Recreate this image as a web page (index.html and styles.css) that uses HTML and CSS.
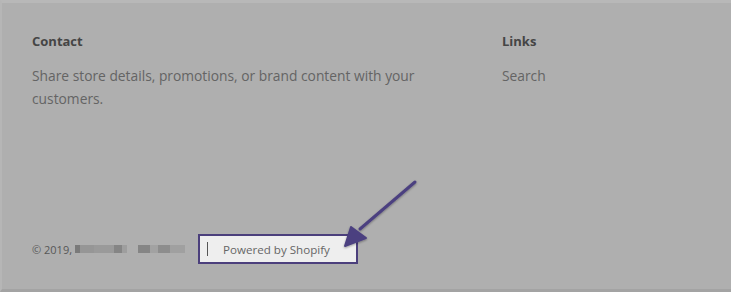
FILE: index.html
```html
<!DOCTYPE html>
<html lang="en">
<head>
    <meta charset="UTF-8">
    <title>Footer</title>
    <link rel="stylesheet" href="styles.css">
</head>
<body>
    <div class="page">
        <footer class="site-footer">
            <div class="footer-cols">
                <div class="footer-col contact">
                    <h4>Contact</h4>
                    <p>Share store details, promotions, or brand content with your customers.</p>
                </div>
                <div class="footer-col links">
                    <h4>Links</h4>
                    <p>Search</p>
                </div>
            </div>
            <div class="footer-bottom">
                <span class="copyright">&copy; 2019,</span>
                <span class="blurred">
                    <i class="b1"></i><i class="b2"></i><i class="b3"></i><i class="b4"></i><i class="b9"></i>
                    <i class="gap"></i>
                    <i class="b5"></i><i class="b6"></i><i class="b7"></i><i class="b8"></i>
                </span>
                <a class="powered" href="#"><span class="caret"></span>Powered by Shopify</a>
            </div>
        </footer>
        <svg class="arrow" width="100" height="90" viewBox="0 0 100 90">
            <defs>
                <filter id="shadow" x="-20%" y="-20%" width="140%" height="140%">
                    <feDropShadow dx="0" dy="1" stdDeviation="1.2" flood-color="#000" flood-opacity="0.35"/>
                </filter>
            </defs>
            <g filter="url(#shadow)">
                <line x1="83" y1="12" x2="28" y2="59" stroke="#4c4180" stroke-width="3" stroke-linecap="round"/>
                <polygon points="13,76 19,57 34,68" fill="#4c4180" stroke="#4c4180" stroke-width="2" stroke-linejoin="round"/>
            </g>
        </svg>
    </div>
</body>
</html>
```

FILE: styles.css
```css
body {
    margin: 0;
    background-color: #afafaf;
    font-family: "Open Sans", Lato, sans-serif;
}

.page {
    position: relative;
    width: 731px;
    height: 292px;
    box-sizing: border-box;
    border-top: 3px solid #b8b8b8;
    border-left: 2px solid #b6b6b6;
    border-bottom: 3px solid #a3a3a3;
    overflow: hidden;
}

.site-footer {
    padding: 28px 0 0 30px;
}

.footer-cols {
    display: flex;
}

.footer-col h4 {
    margin: 0 0 13px;
    font-size: 13px;
    font-weight: 700;
    line-height: 20px;
    color: #454545;
}

.footer-col p {
    margin: 0;
    font-size: 13.8px;
    line-height: 23px;
    color: #646464;
}

.contact {
    width: 400px;
    margin-right: 70px;
}

.footer-bottom {
    display: flex;
    align-items: center;
    margin-top: 124px;
}

.copyright {
    font-size: 11px;
    color: #575757;
}

.blurred {
    display: flex;
    align-items: center;
    margin-left: 3px;
    filter: blur(0.6px);
}

.blurred i {
    display: block;
    height: 8px;
    background-color: #8a8a8a;
}

.blurred .b1 { width: 5px; background-color: #7a7a7a; }
.blurred .b2 { width: 14px; background-color: #969696; }
.blurred .b3 { width: 20px; background-color: #9a9a9a; }
.blurred .b4 { width: 8px; background-color: #858585; }
.blurred .b9 { width: 5px; background-color: #9e9e9e; }
.blurred .gap { width: 11px; background: none; }
.blurred .b5 { width: 12px; background-color: #858585; }
.blurred .b6 { width: 8px; background-color: #a2a2a2; }
.blurred .b7 { width: 12px; background-color: #8d8d8d; }
.blurred .b8 { width: 15px; background-color: #a0a0a0; }

.powered {
    display: flex;
    align-items: center;
    box-sizing: border-box;
    width: 160px;
    height: 30px;
    margin-left: 13px;
    padding-left: 7px;
    border: 2px solid #4b3f7c;
    background-color: #eeeeee;
    font-size: 11.6px;
    color: #666;
    text-decoration: none;
}

.caret {
    display: block;
    width: 1px;
    height: 14px;
    margin-right: 15px;
    background-color: #555;
}

.arrow {
    position: absolute;
    left: 330px;
    top: 167px;
}
```
